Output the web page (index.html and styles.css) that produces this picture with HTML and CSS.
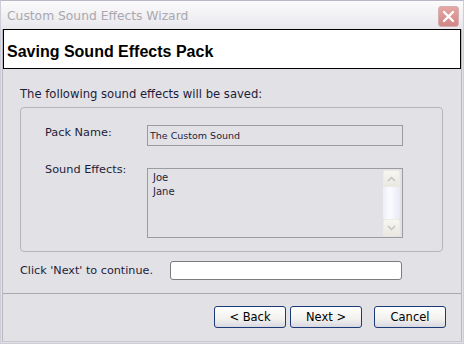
FILE: index.html
```html
<!DOCTYPE html>
<html lang="en">

<head>
    <meta charset="UTF-8">
    <title>Custom Sound Effects Wizard</title>
    <link rel="stylesheet" href="styles.css">
</head>

<body>
    <div class="window">
        <div class="titlebar">
            <span class="title">Custom Sound Effects Wizard</span>
            <div class="close">
                <svg width="13" height="13" viewBox="0 0 13 13">
                    <path d="M2 2 L11 11 M11 2 L2 11" stroke="#fff" stroke-width="2.4" stroke-linecap="round" />
                </svg>
            </div>
        </div>

        <div class="frame">
            <div class="header">Saving Sound Effects Pack</div>

            <div class="content">
                <p class="intro">The following sound effects will be saved:</p>

                <div class="group">
                    <div class="row">
                        <span class="label">Pack Name:</span>
                        <div class="field">The Custom Sound</div>
                    </div>
                    <div class="row">
                        <span class="label list-label">Sound Effects:</span>
                        <div class="listbox">
                            <div class="items">
                                <div>Joe</div>
                                <div>Jane</div>
                            </div>
                            <div class="scrollbar">
                                <div class="arrow">
                                    <svg width="9" height="6" viewBox="0 0 9 6">
                                        <path d="M1 5 L4.5 1.5 L8 5" fill="none" stroke="#c4c3bd" stroke-width="1.5" />
                                    </svg>
                                </div>
                                <div class="track"></div>
                                <div class="arrow">
                                    <svg width="9" height="6" viewBox="0 0 9 6">
                                        <path d="M1 1 L4.5 4.5 L8 1" fill="none" stroke="#c4c3bd" stroke-width="1.5" />
                                    </svg>
                                </div>
                            </div>
                        </div>
                    </div>
                </div>

                <div class="status">
                    <span>Click 'Next' to continue.</span>
                    <div class="progress"></div>
                </div>
            </div>

            <div class="footer">
                <button>&lt; Back</button>
                <button>Next &gt;</button>
                <button class="cancel">Cancel</button>
            </div>
        </div>
    </div>
</body>

</html>
```

FILE: styles.css
```css
* {
    box-sizing: border-box;
    font-family: 'DejaVu Sans', sans-serif;
}

body {
    margin: 0;
    padding: 0;
    background-color: #e2e1e6;
}

.window {
    width: 464px;
    height: 344px;
    background-color: #e2e1e6;
    border: 1px solid #cfcdd8;
    border-top-color: #b9b7c8;
    display: flex;
    flex-direction: column;
}

.titlebar {
    height: 28px;
    display: flex;
    align-items: center;
    justify-content: space-between;
    padding: 0 4px 0 6px;
    background: linear-gradient(#fbfbfc, #e8e7ec);
}

.title {
    color: #a9a8b0;
    font-size: 12.3px;
    padding-top: 1px;
}

.close {
    width: 21px;
    height: 21px;
    margin-top: 3px;
    border: 1px solid #d7aeb0;
    border-radius: 3px;
    background: linear-gradient(#e4a6a4, #d18684);
    display: flex;
    align-items: center;
    justify-content: center;
}

.frame {
    flex: 1;
    margin: 0 1px 1px;
    border-left: 1px solid #b9b8c0;
    border-right: 1px solid #b9b8c0;
    border-bottom: 1px solid #c8c7ce;
    display: flex;
    flex-direction: column;
}

.header {
    height: 40px;
    background-color: #fff;
    border: 1px solid #000;
    padding: 13px 0 0 3px;
    font-family: 'Liberation Sans', sans-serif;
    font-weight: bold;
    font-size: 16px;
    color: #000;
}

.content {
    padding: 18px 18px 0 17px;
    font-size: 11.6px;
    line-height: 14px;
    color: #1d1d3a;
}

.intro {
    margin: 0 0 6px;
}

.group {
    height: 145px;
    width: 423px;
    border: 1px solid #b6b5bc;
    border-radius: 4px;
    padding: 17px 0 0 24px;
}

.row {
    display: flex;
    margin-bottom: 22px;
}

.label {
    width: 102px;
    padding-top: 1px;
    font-size: 11.3px;
}

.list-label {
    margin-top: -6px;
}

.field {
    width: 256px;
    height: 21px;
    border: 1px solid #9c9ba2;
    padding: 3px 0 0 2px;
    font-size: 9.5px;
}

.listbox {
    width: 256px;
    height: 70px;
    border: 1px solid #9c9ba2;
    padding: 1px;
    display: flex;
}

.items {
    flex: 1;
    padding: 1px 0 0 4px;
    font-size: 10px;
    line-height: 14px;
}

.scrollbar {
    width: 17px;
    display: flex;
    flex-direction: column;
    margin-right: 1px;
}

.arrow {
    height: 17px;
    background: linear-gradient(#f7f6f1, #e9e8e0);
    border: 1px solid #ecebe4;
    border-radius: 2px;
    display: flex;
    align-items: center;
    justify-content: center;
}

.track {
    flex: 1;
    background: linear-gradient(to right, #eeeef8, #fbfbff 40%, #e9e9f5);
}

.status {
    display: flex;
    align-items: center;
    margin-top: 9px;
}

.status span {
    width: 150px;
    font-size: 11.2px;
}

.progress {
    width: 232px;
    height: 19px;
    background-color: #fff;
    border: 1px solid #7c7b80;
    border-radius: 3px;
}

.footer {
    margin-top: 13px;
    border-top: 1px solid #a8a7ae;
    flex: 1;
    display: flex;
    justify-content: flex-end;
    padding: 12px 15px 0 0;
    gap: 4px;
}

button {
    width: 72px;
    height: 22px;
    border: 1px solid #1b3a78;
    border-radius: 3px;
    background: linear-gradient(#ffffff, #f2f1ee 60%, #d9d8e2);
    font-size: 11.5px;
    color: #000;
    padding: 0;
}

.cancel {
    margin-left: 8px;
}
```
